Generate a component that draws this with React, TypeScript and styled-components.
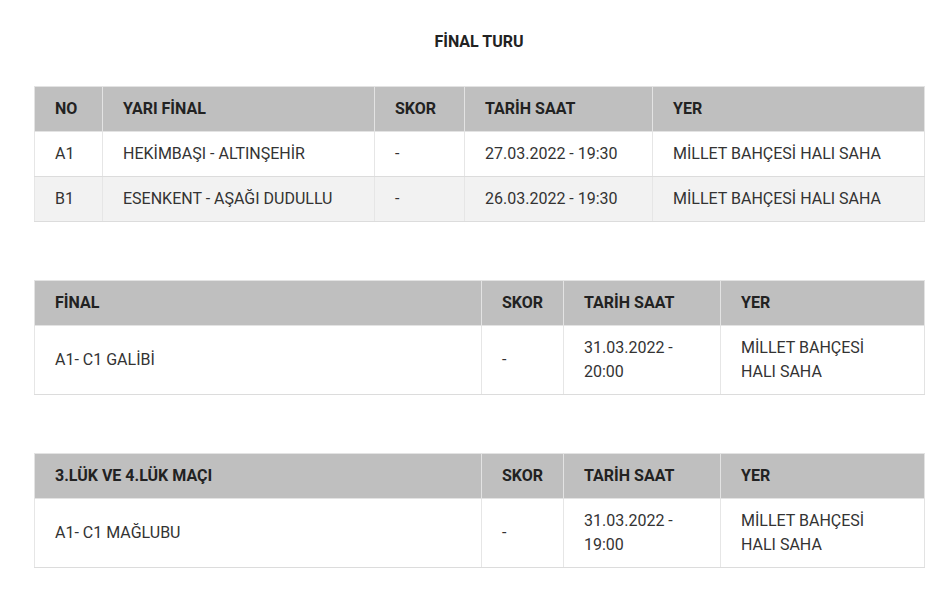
import React from 'react';
import styled, { createGlobalStyle } from 'styled-components';

const GlobalStyle = createGlobalStyle`
  body {
    margin: 0;
    background: #fff;
    font-family: Roboto, "Liberation Sans", Arial, sans-serif;
    color: #333;
  }
`;

const Page = styled.div`
  width: 890px;
  padding: 30px 0 40px 34px;
`;

const Title = styled.h3`
  margin: 0 0 32px;
  text-align: center;
  font-size: 16px;
  line-height: 24px;
  font-weight: 700;
  color: #222;
`;

const Table = styled.table`
  width: 100%;
  table-layout: fixed;
  border-collapse: collapse;
  border: 1px solid #e3e3e3;
  margin-bottom: 58px;
  font-size: 16px;
  line-height: 24px;
`;

const Th = styled.th`
  background: #bfbfbf;
  color: #222;
  font-weight: 700;
  text-align: left;
  padding: 10px 20px;
  border-left: 1px solid #e3e3e3;
  border-bottom: 1px solid #e3e3e3;
`;

const Tr = styled.tr<{ $striped?: boolean }>`
  background: ${({ $striped }) => ($striped ? '#f2f2f2' : '#fff')};
`;

const Td = styled.td`
  padding: 10px 26px 10px 20px;
  border-left: 1px solid #e6e6e6;
  border-bottom: 1px solid #dcdcdc;
  vertical-align: middle;
`;

type Match = { name: string; score: string; date: string; place: string; no?: string };

const semis: Match[] = [
  { no: 'A1', name: 'HEKİMBAŞI - ALTINŞEHİR', score: '-', date: '27.03.2022 - 19:30', place: 'MİLLET BAHÇESİ HALI SAHA' },
  { no: 'B1', name: 'ESENKENT - AŞAĞI DUDULLU', score: '-', date: '26.03.2022 - 19:30', place: 'MİLLET BAHÇESİ HALI SAHA' },
];

const SingleTable: React.FC<{ title: string; match: Match }> = ({ title, match }) => (
  <Table>
    <colgroup>
      <col style={{ width: 447 }} />
      <col style={{ width: 82 }} />
      <col style={{ width: 157 }} />
      <col style={{ width: 204 }} />
    </colgroup>
    <thead>
      <tr>
        <Th>{title}</Th>
        <Th>SKOR</Th>
        <Th>TARİH SAAT</Th>
        <Th>YER</Th>
      </tr>
    </thead>
    <tbody>
      <Tr>
        <Td>{match.name}</Td>
        <Td>{match.score}</Td>
        <Td>{match.date}</Td>
        <Td>{match.place}</Td>
      </Tr>
    </tbody>
  </Table>
);

const App: React.FC = () => (
  <>
    <GlobalStyle />
    <Page>
      <Title>FİNAL TURU</Title>
      <Table>
        <colgroup>
          <col style={{ width: 68 }} />
          <col style={{ width: 272 }} />
          <col style={{ width: 90 }} />
          <col style={{ width: 188 }} />
          <col style={{ width: 272 }} />
        </colgroup>
        <thead>
          <tr>
            <Th>NO</Th>
            <Th>YARI FİNAL</Th>
            <Th>SKOR</Th>
            <Th>TARİH SAAT</Th>
            <Th>YER</Th>
          </tr>
        </thead>
        <tbody>
          {semis.map((m, i) => (
            <Tr key={m.no} $striped={i % 2 === 1}>
              <Td>{m.no}</Td>
              <Td>{m.name}</Td>
              <Td>{m.score}</Td>
              <Td>{m.date}</Td>
              <Td>{m.place}</Td>
            </Tr>
          ))}
        </tbody>
      </Table>
      <SingleTable
        title="FİNAL"
        match={{ name: 'A1- C1 GALİBİ', score: '-', date: '31.03.2022 - 20:00', place: 'MİLLET BAHÇESİ HALI SAHA' }}
      />
      <SingleTable
        title="3.LÜK VE 4.LÜK MAÇI"
        match={{ name: 'A1- C1 MAĞLUBU', score: '-', date: '31.03.2022 - 19:00', place: 'MİLLET BAHÇESİ HALI SAHA' }}
      />
    </Page>
  </>
);

export default App;
